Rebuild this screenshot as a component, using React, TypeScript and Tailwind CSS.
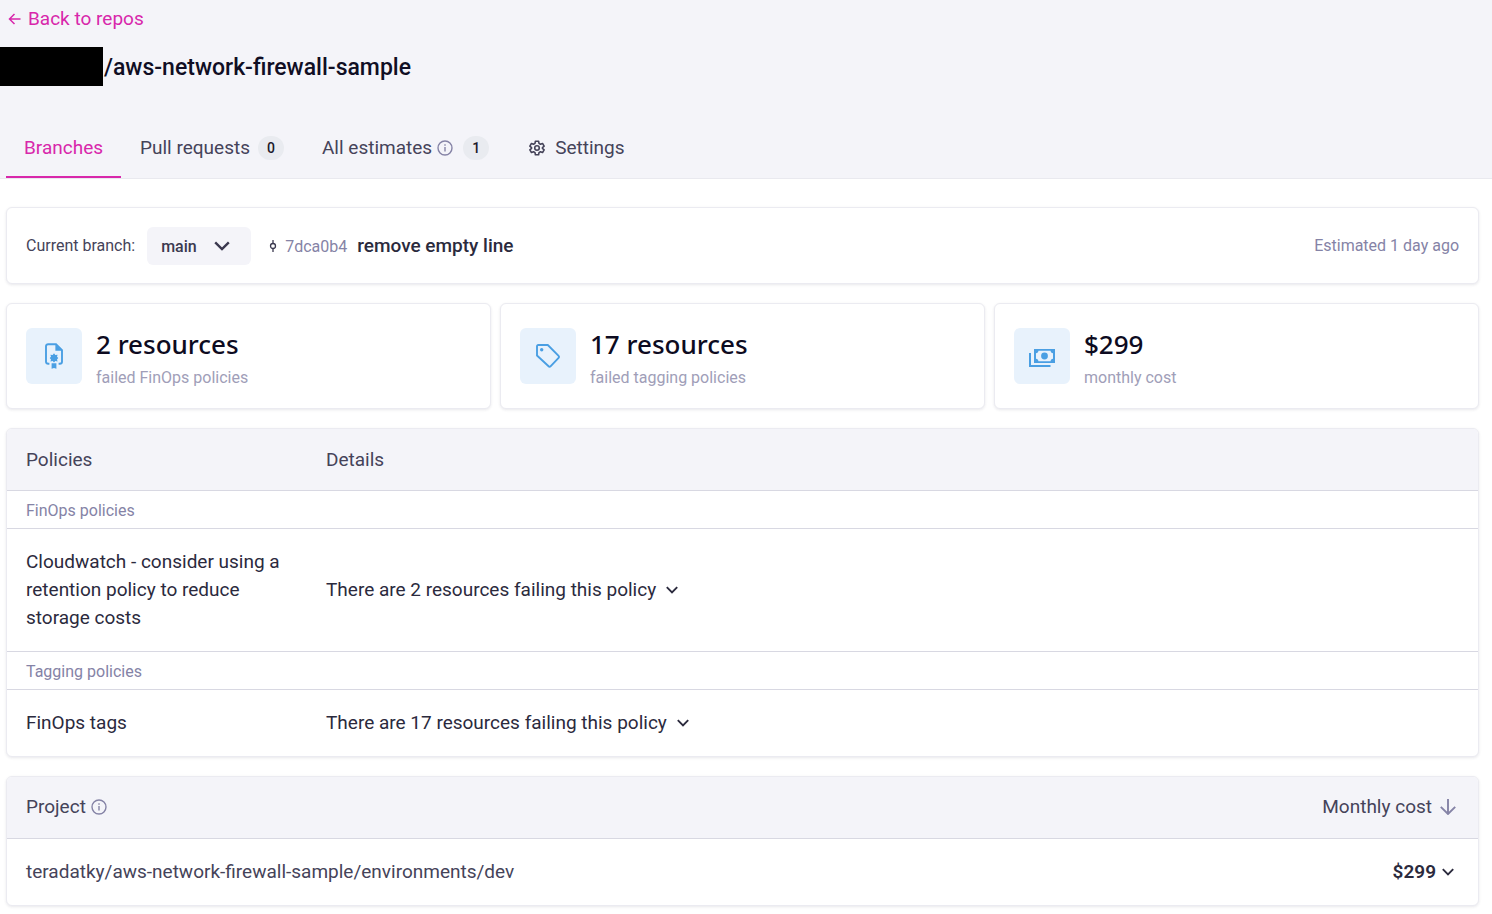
import type { ReactNode } from "react";

function InfoIcon() {
  return (
    <svg className="size-4 shrink-0 text-[#8583a6]" viewBox="0 0 16 16" fill="none" stroke="currentColor" strokeWidth="1.4" aria-hidden="true">
      <circle cx="8" cy="8" r="7" />
      <path d="M8 7v4.600" />
      <path d="M8 4.200v1.500" />
    </svg>
  );
}

function ChevronIcon() {
  return (
    <svg className="h-2 w-3 shrink-0" viewBox="0 0 12 8" fill="none" stroke="currentColor" strokeWidth="1.9" aria-hidden="true">
      <path d="M0.8 1.2 6 6.4l5.2-5.2" />
    </svg>
  );
}

function GearIcon() {
  return (
    <svg className="size-4 shrink-0" viewBox="0 0 24 24" fill="none" stroke="currentColor" strokeWidth="2.4" strokeLinejoin="round" aria-hidden="true">
      <path d="M9.6 1.8h4.8l.6 3.2 2.2 1.3 3.1-1.1 2.4 4.1-2.5 2.1v1.2l2.5 2.1-2.4 4.1-3.1-1.1-2.2 1.3-.6 3.2H9.6L9 19l-2.2-1.3-3.1 1.1-2.4-4.1 2.5-2.1v-1.2L1.300 9.300l2.4-4.100 3.100 1.100L9 5z" />
      <circle cx="12" cy="12" r="3.4" />
    </svg>
  );
}

function CertificateIcon() {
  return (
    <svg className="h-[26px] w-[18px]" viewBox="0 0 18 26" fill="none" aria-hidden="true">
      <path d="M4.400 20.800H3.200C1.900 20.800 1 20 1 18.700V3.300C1 2 1.900 1.200 3.200 1.200H11l6 6v11.500c0 1.300-.9 2.100-2.200 2.100h-1.200" stroke="currentColor" strokeWidth="1.900" />
      <path d="M10.400 1v6.800H17z" fill="currentColor" />
      <path d="m9 10.200 1.300 1.900 2.300-.4-.6 2.100 1.300 1.300-1.300 1.300.6 2.100-2.300-.4L9 19.600l-1.300-1.500-2.300.4.6-2.100-1.300-1.300 1.300-1.300-.6-2.100 2.300.4z" fill="currentColor" />
      <path d="M6.600 20.200h4.800v5.500L9 24.900l-2.400.8z" fill="currentColor" />
    </svg>
  );
}

function TagIcon() {
  return (
    <svg className="size-6" viewBox="0 0 24 24" fill="none" aria-hidden="true">
      <path d="M1 2.200C1 1.500 1.500 1 2.200 1h9.600L22.600 11.900a1.300 1.300 0 0 1 0 1.900L14.500 22.300a1.300 1.300 0 0 1-1.900 0L1 11.500z" stroke="currentColor" strokeWidth="1.900" strokeLinejoin="round" />
      <circle cx="5.700" cy="5.700" r="1.700" fill="currentColor" />
    </svg>
  );
}

function MoneyIcon() {
  return (
    <svg className="mt-1 h-5 w-[26px]" viewBox="0 0 26 20" fill="none" aria-hidden="true">
      <path d="M1 5v13h20.500" stroke="currentColor" strokeWidth="2" />
      <path fillRule="evenodd" clipRule="evenodd" d="M5 1h21v14H5zM9.400 2.800c0 1.400-1 2.400-2.400 2.400v5.600c1.400 0 2.400 1 2.400 2.400h12.200c0-1.400 1-2.400 2.400-2.400V5.200c-1.400 0-2.400-1-2.400-2.400z" fill="currentColor" />
      <circle cx="15.500" cy="8" r="3.400" fill="currentColor" />
    </svg>
  );
}

const card = "overflow-hidden rounded-md border border-[#ebebf1] bg-white shadow-[0_1px_3px_rgba(30,30,60,0.10)]";

function Tab({ active = false, children }: { active?: boolean; children: ReactNode }) {
  return (
    <a
      href="#"
      aria-current={active ? "page" : undefined}
      className={
        active
          ? "flex h-[62px] items-center border-b-2 border-[#d827ab] px-[18px] pt-1 text-[#d827ab]"
          : "flex h-[62px] items-center border-b-2 border-transparent px-[19px] pt-1"
      }
    >
      {children}
    </a>
  );
}

function Badge({ children }: { children: ReactNode }) {
  return (
    <span className="ml-2 flex h-6 w-[26px] items-center justify-center rounded-full bg-[#e9ebf0] text-sm font-medium text-[#1b1a2b]">
      {children}
    </span>
  );
}

function Stat({ icon, value, label }: { icon: ReactNode; value: string; label: string }) {
  return (
    <section className={`${card} flex h-[106px] items-center gap-3.5 px-[19px]`}>
      <div className="flex size-14 shrink-0 items-center justify-center rounded-md bg-[#e8f2fc] text-[#4a9fe3]">{icon}</div>
      <div className="pt-1.5">
        <p className="font-['Noto_Sans'] text-[26px] leading-9 font-medium text-[#0d0b21]">{value}</p>
        <p className="mt-0.5 text-base leading-7 text-[#a09eb8]">{label}</p>
      </div>
    </section>
  );
}

function PolicyGroup({ name }: { name: string }) {
  return (
    <tr className="border-b border-[#d8d8e2]">
      <th colSpan={2} scope="colgroup" className="h-[38px] px-[19px] pt-1 text-left text-base font-normal text-[#8583a6]">
        {name}
      </th>
    </tr>
  );
}

function PolicyRow({ name, count }: { name: string; count: number }) {
  return (
    <tr className="border-b border-[#d8d8e2] last:border-b-0">
      <td className="px-[19px] py-[19px]">{name}</td>
      <td className="px-[19px] py-[19px]">
        <button type="button" className="flex items-center gap-2.5">
          There are {count} resources failing this policy
          <ChevronIcon />
        </button>
      </td>
    </tr>
  );
}

export default function App() {
  return (
    <div className="min-h-screen bg-white font-['Roboto',sans-serif] text-[19px] leading-7 text-[#2b2a3d]">
      <header className="border-b border-[#e9e9ef] bg-[#f4f4f9]">
        <a href="#" className="ml-2 inline-flex h-[38px] items-center gap-[7px] align-top text-[#d827ab]">
          <svg className="h-3 w-[13px]" viewBox="0 0 13 12" fill="none" stroke="currentColor" strokeWidth="1.500" aria-hidden="true">
            <path d="M12.500 6H1.500M6.500 1l-5 5 5 5" />
          </svg>
          Back to repos
        </a>
        <div className="mt-[9px] flex h-[39px] items-center">
          <span className="h-full w-[103px] bg-black" />
          <h1 className="ml-px pt-0.5 text-[23px] font-medium text-[#100e24]">/aws-network-firewall-sample</h1>
        </div>
        <nav className="mt-[30px] ml-1.5 flex text-[#454359]">
          <Tab active>Branches</Tab>
          <Tab>
            Pull requests <Badge>0</Badge>
          </Tab>
          <Tab>
            <span className="mr-[5px]">All estimates</span>
            <span className="mr-0.5">
              <InfoIcon />
            </span>
            <Badge>1</Badge>
          </Tab>
          <Tab>
            <span className="mr-2.5 ml-0.5">
              <GearIcon />
            </span>
            Settings
          </Tab>
        </nav>
      </header>

      <main className="flex flex-col gap-[19px] pt-7 pr-[13px] pb-1.5 pl-1.5">
        <section className={`${card} flex h-[77px] items-center px-[19px] text-base`}>
          <label htmlFor="branch" className="text-[#454359]">
            Current branch:
          </label>
          <div className="relative ml-3">
            <select id="branch" className="h-[38px] w-[104px] appearance-none rounded-md bg-[#f4f4f9] pt-0.5 pr-8 pl-3.5 font-medium text-[#3b394f]">
              <option>main</option>
            </select>
            <svg className="pointer-events-none absolute top-3.5 right-[21px] h-2.5 w-4" viewBox="0 0 16 10" fill="none" stroke="#3b394f" strokeWidth="2.400" aria-hidden="true">
              <path d="m1.200 1.400 6.800 6.600 6.800-6.600" />
            </svg>
          </div>
          <svg className="ml-[18px] h-3 w-2 shrink-0 text-[#3b394f]" viewBox="0 0 8 12" fill="none" stroke="currentColor" strokeWidth="1.300" aria-hidden="true">
            <circle cx="4" cy="6" r="2.500" />
            <path d="M4 0v3.500M4 8.500V12" />
          </svg>
          <a href="#" className="ml-2 pt-0.5 text-[#8583a6]">
            7dca0b4
          </a>
          <span className="ml-2.5 pt-0.5 text-[19px] font-medium text-[#2b2a3d]">remove empty line</span>
          <span className="ml-auto text-[#8583a6]">Estimated 1 day ago</span>
        </section>

        <div className="grid grid-cols-3 gap-[9px]">
          <Stat icon={<CertificateIcon />} value="2 resources" label="failed FinOps policies" />
          <Stat icon={<TagIcon />} value="17 resources" label="failed tagging policies" />
          <Stat icon={<MoneyIcon />} value="$299" label="monthly cost" />
        </div>

        <section className={card}>
          <table className="w-full table-fixed">
            <colgroup>
              <col className="w-[300px]" />
              <col />
            </colgroup>
            <thead>
              <tr className="border-b border-[#d8d8e2] bg-[#f4f4f9] text-left text-[#454359]">
                <th scope="col" className="h-[61px] px-[19px] pt-0.5 font-normal">
                  Policies
                </th>
                <th scope="col" className="px-[19px] pt-0.5 font-normal">
                  Details
                </th>
              </tr>
            </thead>
            <tbody>
              <PolicyGroup name="FinOps policies" />
              <PolicyRow name="Cloudwatch - consider using a retention policy to reduce storage costs" count={2} />
              <PolicyGroup name="Tagging policies" />
              <PolicyRow name="FinOps tags" count={17} />
            </tbody>
          </table>
        </section>

        <section className={card}>
          <table className="w-full">
            <thead>
              <tr className="border-b border-[#d8d8e2] bg-[#f4f4f9] text-[#454359]">
                <th scope="col" className="h-[62px] px-[19px] font-normal">
                  <span className="flex items-center gap-[5px]">
                    Project <InfoIcon />
                  </span>
                </th>
                <th scope="col" className="px-[19px] font-normal">
                  <button type="button" className="ml-auto flex items-center gap-2">
                    Monthly cost
                    <svg className="mr-[3px] size-4 text-[#8583a6]" viewBox="0 0 16 16" fill="none" stroke="currentColor" strokeWidth="1.900" aria-hidden="true">
                      <path d="M8 0v14.500M0.800 7.800 8 15l7.200-7.200" />
                    </svg>
                  </button>
                </th>
              </tr>
            </thead>
            <tbody>
              <tr>
                <td className="h-[66px] px-[19px] text-[#454359]">teradatky/aws-network-firewall-sample/environments/dev</td>
                <td className="px-[19px]">
                  <button type="button" className="mr-[5px] ml-auto flex items-center gap-1.5 font-semibold">
                    $299
                    <ChevronIcon />
                  </button>
                </td>
              </tr>
            </tbody>
          </table>
        </section>
      </main>
    </div>
  );
}
